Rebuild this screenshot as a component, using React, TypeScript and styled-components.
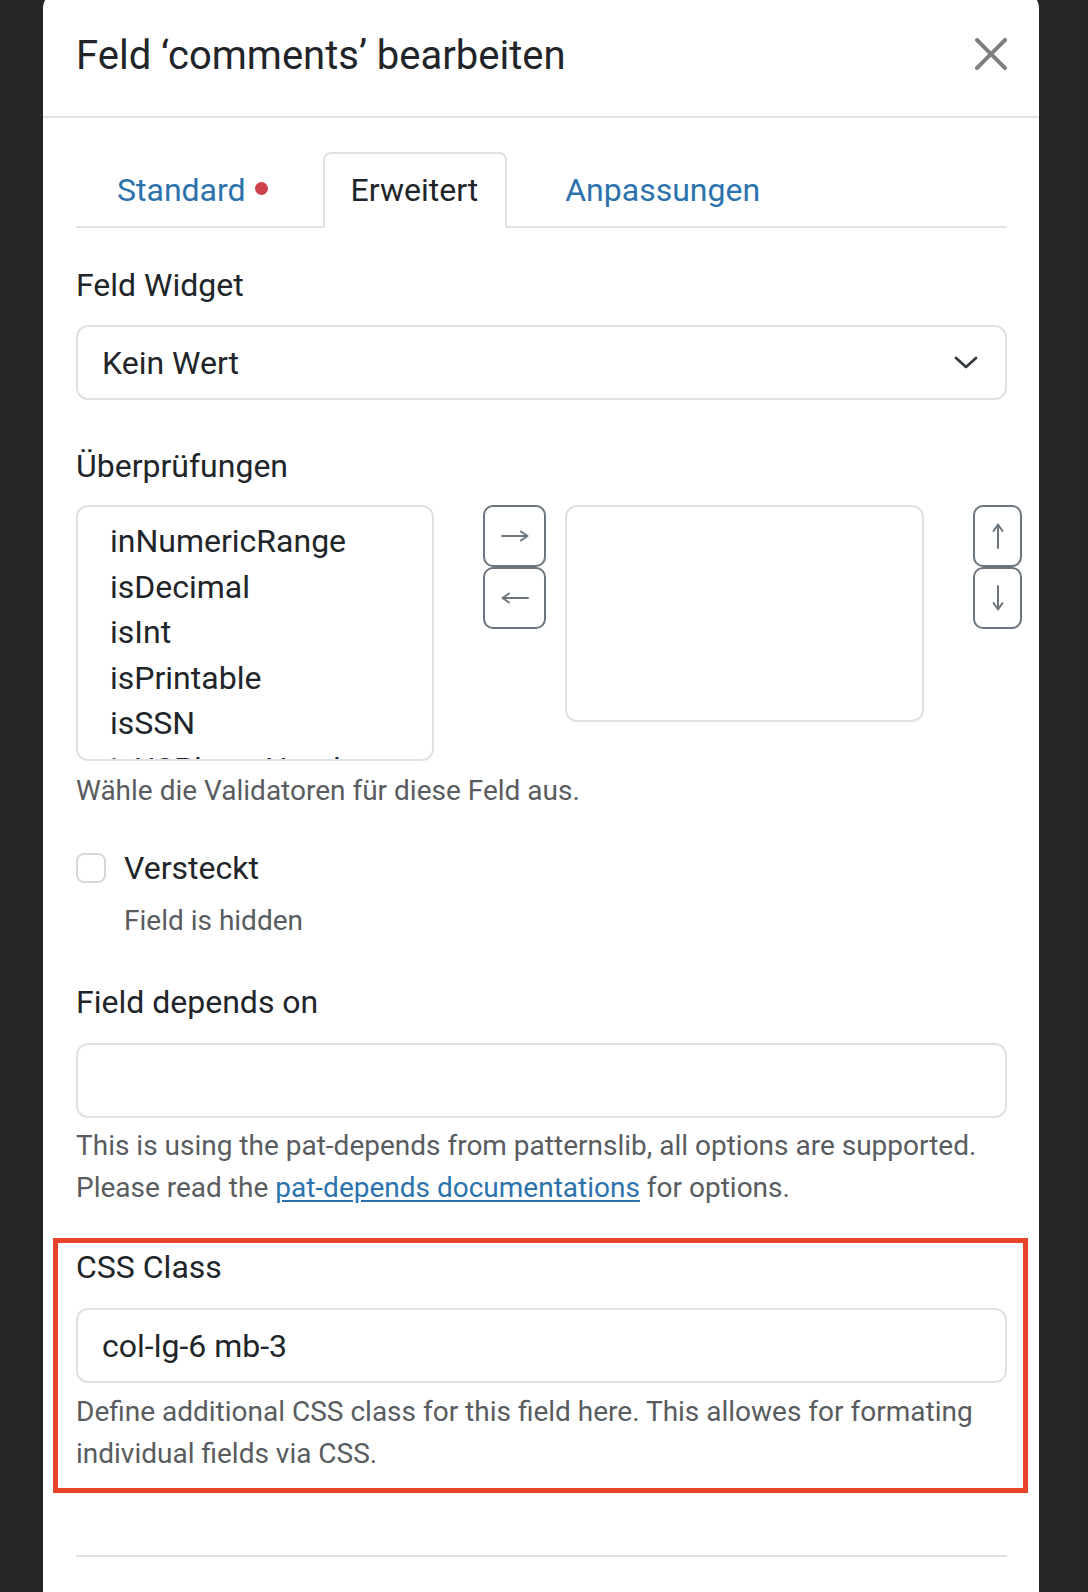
import React from "react";
import styled, { createGlobalStyle } from "styled-components";

const GlobalStyle = createGlobalStyle`
  html, body {
    margin: 0;
    padding: 0;
  }
  body {
    background: #262626;
    font-family: Roboto, "Liberation Sans", Arial, sans-serif;
    color: #212529;
    overflow: hidden;
  }
  * {
    box-sizing: border-box;
  }
`;

const Page = styled.div`
  display: flex;
  width: 1088px;
  height: 1592px;
  padding-left: 43px;
  overflow: hidden;
`;

const Modal = styled.div`
  width: 996px;
  margin-top: -8px;
  min-height: 1620px;
  background: #ffffff;
  border-radius: 16px 16px 0 0;
  display: flex;
  flex-direction: column;
`;

const Header = styled.header`
  display: flex;
  align-items: center;
  justify-content: space-between;
  padding: 32px 32px 32px 33px;
  border-bottom: 2px solid #dee2e6;
`;

const Title = styled.h1`
  margin: 2px 0 -2px;
  font-size: 40px;
  line-height: 60px;
  font-weight: 400;
  color: #212529;
`;

const CloseButton = styled.button`
  width: 32px;
  height: 32px;
  padding: 0;
  border: 0;
  background: none;
  display: flex;
  cursor: pointer;
`;

const Body = styled.div`
  padding: 32px 32px 0 33px;
  display: flex;
  flex-direction: column;
`;

const Tabs = styled.nav`
  display: flex;
  margin-top: 2px;
  border-bottom: 2px solid #dee2e6;
`;

const Tab = styled.div<{ $active?: boolean; $pl: number; $pr: number }>`
  display: flex;
  align-items: center;
  padding: 12px ${(p) => p.$pr}px 12px ${(p) => p.$pl}px;
  margin-bottom: -2px;
  font-size: 32px;
  line-height: 48px;
  border: 2px solid transparent;
  border-radius: 8px 8px 0 0;
  color: ${(p) => (p.$active ? "#212529" : "#2c72ad")};
  background: ${(p) => (p.$active ? "#ffffff" : "transparent")};
  border-color: ${(p) =>
    p.$active ? "#dee2e6 #dee2e6 #ffffff" : "transparent"};
`;

const Dot = styled.span`
  width: 13px;
  height: 13px;
  margin-left: 9px;
  margin-top: -3px;
  border-radius: 50%;
  background: #cf414b;
`;

const Pane = styled.div`
  padding-top: 33px;
  display: flex;
  flex-direction: column;
`;

const Field = styled.div<{ $mb: number }>`
  display: flex;
  flex-direction: column;
  margin-bottom: ${(p) => p.$mb}px;
`;

const Label = styled.label<{ $mb?: number }>`
  display: block;
  font-size: 32px;
  line-height: 48px;
  color: #212529;
  margin-bottom: ${(p) => p.$mb ?? 16}px;
`;

const Control = styled.div`
  height: 75px;
  display: flex;
  align-items: center;
  justify-content: space-between;
  padding: 0 27px 0 24px;
  border: 2px solid #dee2e6;
  border-radius: 12px;
  font-size: 32px;
  color: #212529;
  background: #ffffff;
`;

const Help = styled.div<{ $mt?: number; $indent?: number }>`
  margin-top: ${(p) => p.$mt ?? 8}px;
  padding-left: ${(p) => p.$indent ?? 0}px;
  font-size: 28px;
  line-height: 42px;
  color: #595c5f;
`;

const Link = styled.a`
  color: #2c72ad;
  text-decoration: underline;
  text-underline-offset: 3px;
`;

const OrderRow = styled.div`
  display: flex;
  align-items: flex-start;
  width: 946px;
`;

const ListBox = styled.div<{ $w: number; $h: number; $ml?: number }>`
  flex-shrink: 0;
  width: ${(p) => p.$w}px;
  height: ${(p) => p.$h}px;
  margin-left: ${(p) => p.$ml ?? 0}px;
  padding: 12px 24px;
  border: 2px solid #dee2e6;
  border-radius: 12px;
  overflow: hidden;
`;

const Option = styled.div`
  padding-left: 8px;
  font-size: 32px;
  line-height: 45.6px;
  color: #212529;
  white-space: nowrap;
`;

const ButtonStack = styled.div<{ $w: number; $ml: number }>`
  flex-shrink: 0;
  display: flex;
  flex-direction: column;
  width: ${(p) => p.$w}px;
  margin-left: ${(p) => p.$ml}px;
`;

const MoveButton = styled.button`
  height: 62px;
  display: flex;
  align-items: center;
  justify-content: center;
  padding: 0;
  border: 2px solid #6c757d;
  border-radius: 10px;
  background: #ffffff;
  cursor: pointer;
`;

const CheckRow = styled.div`
  display: flex;
  align-items: center;
  gap: 18px;
`;

const CheckBox = styled.span`
  width: 30px;
  height: 30px;
  border: 2px solid #d5d9dd;
  border-radius: 8px;
  background: #ffffff;
`;

const CheckLabel = styled.span`
  font-size: 32px;
  line-height: 48px;
  color: #212529;
`;

const Highlight = styled.div`
  margin: 29px -21px 0 -23px;
  padding: 0 16px 13px 18px;
  border: 5px solid #e8442c;
  display: flex;
  flex-direction: column;
`;

const Divider = styled.hr`
  margin: 62px 0 0;
  border: 0;
  border-top: 2px solid #dee2e6;
`;

const CloseIcon = () => (
  <svg width="32" height="32" viewBox="0 0 16 16" fill="#7f7f7f">
    <path d="M.293.293a1 1 0 0 1 1.414 0L8 6.586 14.293.293a1 1 0 1 1 1.414 1.414L9.414 8l6.293 6.293a1 1 0 0 1-1.414 1.414L8 9.414l-6.293 6.293a1 1 0 0 1-1.414-1.414L6.586 8 .293 1.707a1 1 0 0 1 0-1.414z" />
  </svg>
);

const Chevron = () => (
  <svg width="24" height="13" viewBox="0 0 24 13" fill="none">
    <polyline
      points="2,2 12,11 22,2"
      stroke="#343a40"
      strokeWidth="2.8"
      strokeLinecap="round"
      strokeLinejoin="round"
    />
  </svg>
);

const HArrow = ({ dir }: { dir: "left" | "right" }) => (
  <svg
    width="28"
    height="12"
    viewBox="0 0 28 12"
    fill="none"
    style={{ transform: dir === "left" ? "scaleX(-1)" : undefined }}
  >
    <path
      d="M1 6 H26.5 M20 1.5 L26.5 6 L20 10.5"
      stroke="#6c757d"
      strokeWidth="2"
      strokeLinecap="round"
      strokeLinejoin="round"
    />
  </svg>
);

const VArrow = ({ dir }: { dir: "up" | "down" }) => (
  <svg
    width="12"
    height="26"
    viewBox="0 0 12 26"
    fill="none"
    style={{ transform: dir === "down" ? "scaleY(-1)" : undefined }}
  >
    <path
      d="M6 1.5 V25 M1.5 8 L6 1.5 L10.5 8"
      stroke="#6c757d"
      strokeWidth="2"
      strokeLinecap="round"
      strokeLinejoin="round"
    />
  </svg>
);

const validators = [
  "inNumericRange",
  "isDecimal",
  "isInt",
  "isPrintable",
  "isSSN",
  "isUSPhoneNumber",
];

export default function App() {
  return (
    <>
      <GlobalStyle />
      <Page>
        <Modal>
          <Header>
            <Title>Feld ‘comments’ bearbeiten</Title>
            <CloseButton aria-label="Schließen">
              <CloseIcon />
            </CloseButton>
          </Header>
          <Body>
            <Tabs>
              <Tab $pl={39} $pr={53}>
                Standard
                <Dot />
              </Tab>
              <Tab $active $pl={26} $pr={27}>
                Erweitert
              </Tab>
              <Tab $pl={56} $pr={25}>
                Anpassungen
              </Tab>
            </Tabs>
            <Pane>
              <Field $mb={42}>
                <Label>Feld Widget</Label>
                <Control>
                  <span>Kein Wert</span>
                  <Chevron />
                </Control>
              </Field>

              <Field $mb={32}>
                <Label $mb={15}>Überprüfungen</Label>
                <OrderRow>
                  <ListBox $w={358} $h={256}>
                    {validators.map((v) => (
                      <Option key={v}>{v}</Option>
                    ))}
                  </ListBox>
                  <ButtonStack $w={63} $ml={49}>
                    <MoveButton aria-label="hinzufügen">
                      <HArrow dir="right" />
                    </MoveButton>
                    <MoveButton aria-label="entfernen">
                      <HArrow dir="left" />
                    </MoveButton>
                  </ButtonStack>
                  <ListBox $w={359} $h={217} $ml={19} />
                  <ButtonStack $w={49} $ml={49}>
                    <MoveButton aria-label="nach oben">
                      <VArrow dir="up" />
                    </MoveButton>
                    <MoveButton aria-label="nach unten">
                      <VArrow dir="down" />
                    </MoveButton>
                  </ButtonStack>
                </OrderRow>
                <Help $mt={9}>Wähle die Validatoren für diese Feld aus.</Help>
              </Field>

              <Field $mb={36}>
                <CheckRow>
                  <CheckBox />
                  <CheckLabel>Versteckt</CheckLabel>
                </CheckRow>
                <Help $indent={48}>Field is hidden</Help>
              </Field>

              <Field $mb={0}>
                <Label $mb={17}>Field depends on</Label>
                <Control />
                <Help $mt={7}>
                  This is using the pat-depends from patternslib, all options
                  are supported.
                  <br />
                  Please read the{" "}
                  <Link href="#">pat-depends documentations</Link> for
                  options.
                </Help>
              </Field>

              <Highlight>
                <Label $mb={17}>CSS Class</Label>
                <Control>
                  <span>col-lg-6 mb-3</span>
                </Control>
                <Help>
                  Define additional CSS class for this field here. This allowes
                  for formating individual fields via CSS.
                </Help>
              </Highlight>

              <Divider />
            </Pane>
          </Body>
        </Modal>
      </Page>
    </>
  );
}
